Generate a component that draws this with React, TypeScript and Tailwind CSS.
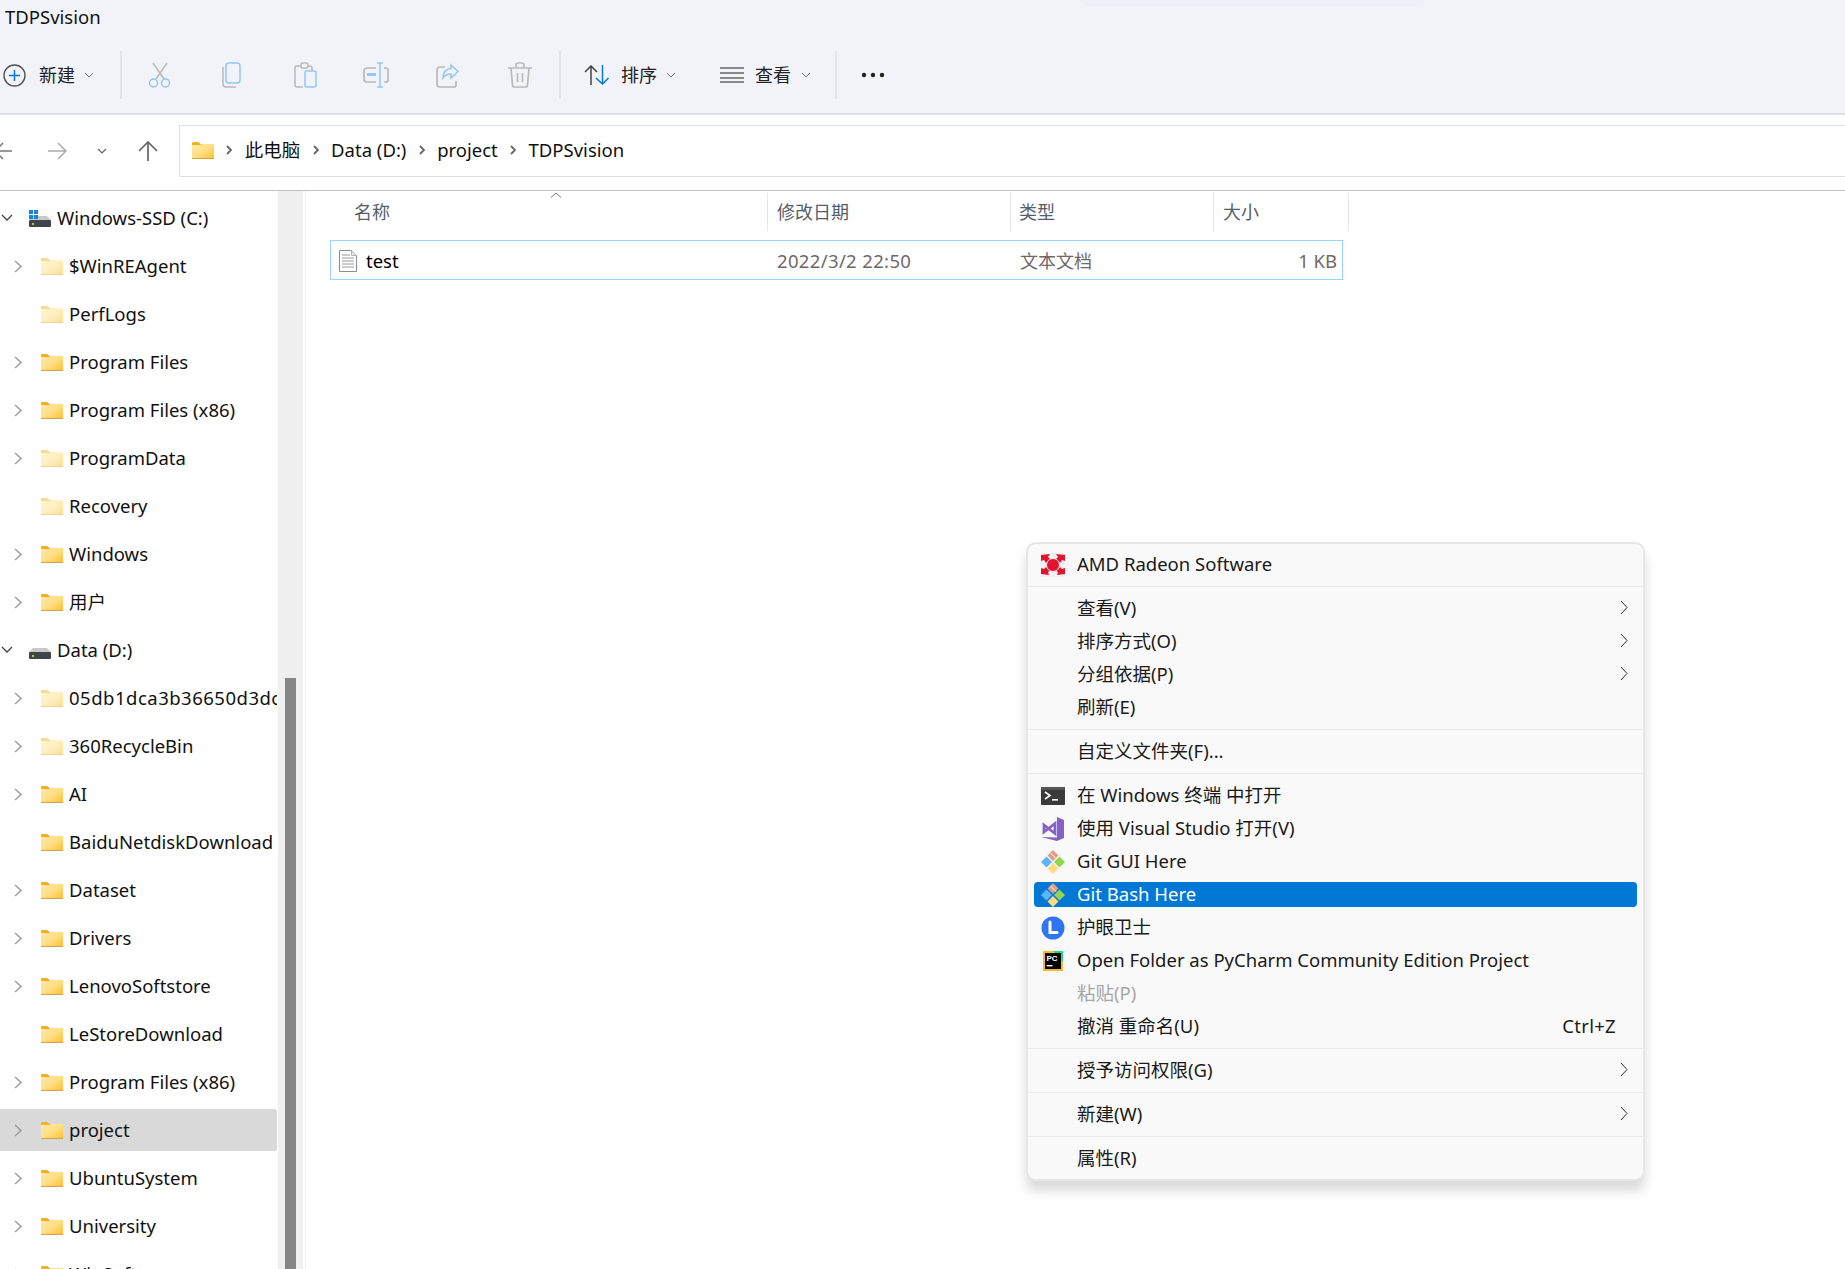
const GREY = '#b9b9b9';
const BLUE = '#93c6f5';

function Folder({ pale }: { pale?: boolean }) {
  return (
    <svg width="22" height="17" viewBox="0 0 22 17" className={pale ? 'shrink-0 opacity-50' : 'shrink-0'}>
      <defs>
        <linearGradient id="folderBody" x1="0" y1="0" x2="1" y2="1">
          <stop offset="0" stopColor="#ffeaa6" />
          <stop offset="0.5" stopColor="#ffdf85" />
          <stop offset="1" stopColor="#fcbf2a" />
        </linearGradient>
      </defs>
      <path d="M0 1a1 1 0 0 1 1-1h5.5l2 2H22v3H0z" fill="#f4b223" />
      <path d="M0 3h8.500L10 2h12v15H0z" fill="url(#folderBody)" />
      <rect x="0" y="16" width="22" height="1" fill="#d8a14e" />
    </svg>
  );
}

function Drive({ windows }: { windows?: boolean }) {
  return (
    <svg width="22" height="17" viewBox="0 0 22 17" className="shrink-0">
      <path d="M4 6h14l4 4H0z" fill="#c9c9c9" />
      <rect x="0" y="10" width="22" height="7" rx="1" fill="#3f4547" />
      <rect x="3" y="13" width="2" height="2" fill="#9ad24a" />
      {windows && (
        <g fill="#1684e0">
          <rect x="0" y="0" width="4" height="4" />
          <rect x="5" y="0" width="4" height="4" />
          <rect x="0" y="5" width="4" height="4" />
          <rect x="5" y="5" width="4" height="4" />
        </g>
      )}
    </svg>
  );
}

function Caret({ open }: { open?: boolean }) {
  if (open) {
    return (
      <svg width="12" height="8" viewBox="0 0 12 8" className="shrink-0" fill="none" stroke="#444" strokeWidth="1.3">
        <path d="M1 1l5 5 5-5" />
      </svg>
    );
  }
  return (
    <svg width="9" height="13" viewBox="0 0 9 13" fill="none" stroke="#9b9b9b" strokeWidth="1.5">
      <path d="M1 1l6 5.500-6 5.500" />
    </svg>
  );
}

const tree = [
  { name: 'Windows-SSD (C:)', drive: 'c' },
  { name: '$WinREAgent', pale: true, arrow: true },
  { name: 'PerfLogs', pale: true },
  { name: 'Program Files', arrow: true },
  { name: 'Program Files (x86)', arrow: true },
  { name: 'ProgramData', pale: true, arrow: true },
  { name: 'Recovery', pale: true },
  { name: 'Windows', arrow: true },
  { name: '用户', arrow: true },
  { name: 'Data (D:)', drive: 'd' },
  { name: '05db1dca3b36650d3dc', pale: true, arrow: true, wide: true },
  { name: '360RecycleBin', pale: true, arrow: true },
  { name: 'AI', arrow: true },
  { name: 'BaiduNetdiskDownload' },
  { name: 'Dataset', arrow: true },
  { name: 'Drivers', arrow: true },
  { name: 'LenovoSoftstore', arrow: true },
  { name: 'LeStoreDownload' },
  { name: 'Program Files (x86)', arrow: true },
  { name: 'project', arrow: true, selected: true },
  { name: 'UbuntuSystem', arrow: true },
  { name: 'University', arrow: true },
  { name: 'WinSoft', arrow: true },
];

function TreeRow({ item }: { item: (typeof tree)[number] }) {
  return (
    <div className="h-[48px] py-[3px] pr-[1px]">
      <div className={`flex h-[42px] items-center rounded-r-[2px] text-[18.5px] whitespace-nowrap overflow-hidden text-[#111] ${item.selected ? 'bg-[#d9d9d9]' : ''}`}>
        {item.drive ? (
          <>
            <div className="w-[29px] pl-[1px] shrink-0 flex"><Caret open /></div>
            <Drive windows={item.drive === 'c'} />
            <span className="ml-[6px]">{item.name}</span>
          </>
        ) : (
          <>
            <div className="w-[41px] pl-[14px] shrink-0 flex">{item.arrow && <Caret />}</div>
            <Folder pale={item.pale} />
            <span className={item.wide ? 'ml-[6px] tracking-[0.5px]' : 'ml-[6px]'}>{item.name}</span>
          </>
        )}
      </div>
    </div>
  );
}

function Divider() {
  return <div className="w-[2px] h-[48px] bg-[#e2e4e9] shrink-0" />;
}

function SmallChevron() {
  return (
    <svg width="10" height="6" viewBox="0 0 10 6" fill="none" stroke="#777" strokeWidth="1" className="shrink-0">
      <path d="M1 1l4 4 4-4" />
    </svg>
  );
}

function ToolIcon({ children }: { children: React.ReactNode }) {
  return (
    <div className="w-[72px] flex justify-center shrink-0">
      <svg width="26" height="26" viewBox="0 0 26 26" fill="none" strokeWidth="1.5">
        {children}
      </svg>
    </div>
  );
}

function Crumb({ text }: { text: string }) {
  return (
    <>
      <svg width="6" height="10" viewBox="0 0 6 10" fill="none" stroke="#666" strokeWidth="1.8" className="shrink-0">
        <path d="M1 1l4 4-4 4" />
      </svg>
      <span className="text-[18.5px] text-[#111]">{text}</span>
    </>
  );
}

function GitIcon() {
  return (
    <svg width="24" height="24" viewBox="0 0 24 24">
      <path d="M12 0l5.500 5.500L12 11 6.500 5.500z" fill="#e39c84" />
      <path d="M9.500 3l5.500 5.500" stroke="#fff" strokeWidth="1" />
      <path d="M5.500 6.500L11 12l-5.500 5.500L0 12z" fill="#5db4ff" />
      <path d="M18.500 6.500L24 12l-5.500 5.500L13 12z" fill="#92d650" />
      <path d="M12 13l5.500 5.500L12 24l-5.500-5.500z" fill="#ffdc80" />
    </svg>
  );
}

function menuIcon(name?: string) {
  switch (name) {
    case 'amd':
      return (
        <svg width="24" height="24" viewBox="0 0 24 24">
          <rect width="24" height="24" fill="#f0f0f0" />
          <g fill="#e2132e">
            <path d="M0 2l9-1-2 3 2 2-4 4-2-3-3 1z" />
            <path d="M24 2l-9-1 2 3-2 2 4 4 2-3 3 1z" />
            <path d="M0 21l8 1-1-3 2-1-4-4-2 2-3-1z" />
            <path d="M24 21l-8 1 1-3-2-1 4-4 2 2 3-1z" />
          </g>
          <circle cx="12" cy="12" r="6.500" fill="#e2132e" stroke="#f0f0f0" strokeWidth="1" />
        </svg>
      );
    case 'terminal':
      return (
        <svg width="24" height="24" viewBox="0 0 24 24">
          <rect y="3" width="24" height="18" rx="1" fill="#3a3a3a" />
          <rect y="3" width="24" height="3" fill="#555" />
          <path d="M4 8l5 3.500-5 3.500" fill="none" stroke="#fff" strokeWidth="1.6" />
          <rect x="11" y="15" width="6" height="1.6" fill="#fff" />
        </svg>
      );
    case 'vs':
      return (
        <svg width="24" height="24" viewBox="0 0 24 24">
          <path d="M16 0l7 3v18l-7 3L0 20l16 .5z" fill="#8661c5" />
          <path d="M3 8v7l4.500-3.500L14 6.500v10l-6.500-5z" fill="none" stroke="#8661c5" strokeWidth="2.8" />
        </svg>
      );
    case 'git':
      return <GitIcon />;
    case 'eye':
      return (
        <svg width="24" height="24" viewBox="0 0 24 24">
          <circle cx="12" cy="12" r="11.500" fill="#2f74f0" />
          <path d="M9 6v10.500h7" fill="none" stroke="#fff" strokeWidth="3" strokeLinecap="round" />
        </svg>
      );
    case 'pycharm':
      return (
        <svg width="24" height="24" viewBox="0 0 24 24">
          <path d="M2 2h20v20H2z" fill="#fcb72b" />
          <path d="M12 2h10v11z" fill="#21d789" />
          <rect x="4" y="4" width="16" height="16" fill="#000" />
          <text x="5.500" y="11.500" fontSize="8" fontWeight="700" fill="#fff" fontFamily="Liberation Sans, sans-serif">PC</text>
          <rect x="5.500" y="16" width="6" height="1.4" fill="#fff" />
        </svg>
      );
    default:
      return null;
  }
}

function MenuItem({ icon, label, arrow, hint, active, disabled }: { icon?: string; label: string; arrow?: boolean; hint?: string; active?: boolean; disabled?: boolean }) {
  return (
    <div className="h-[33px] py-[4px] mx-[6px]">
      <div className={`h-[25px] flex items-center pl-[7px] rounded-[4px] text-[18.5px] whitespace-nowrap ${active ? 'bg-[#0078d4] text-white' : disabled ? 'text-[#a6a6a6]' : 'text-[#1a1a1a]'}`}>
        <div className="w-[24px] h-[24px] shrink-0">{menuIcon(icon)}</div>
        <span className="ml-[12px] flex-1 -mt-[2px]">{label}</span>
        {hint && <span className="mr-[21px] -mt-[2px] tracking-[0.3px]">{hint}</span>}
        {arrow && (
          <svg width="8" height="15" viewBox="0 0 8 15" fill="none" stroke="#333" strokeWidth="1" className="mr-[9px] -mt-[2px]">
            <path d="M1 1l6 6.500-6 6.500" />
          </svg>
        )}
      </div>
    </div>
  );
}

function Sep() {
  return <div className="h-px my-[5px] bg-[#e8e8e8]" />;
}

export default function App() {
  return (
    <div className="relative h-[1269px] overflow-hidden bg-white flex flex-col [font-family:'Noto_Sans','Noto_Sans_CJK_SC',sans-serif]">
      {/* title + command bar */}
      <div className="bg-[#f1f3f9] border-b-2 border-[#e0e2e8] h-[115px] shrink-0">
        <div className="h-[51px] pl-[5px] pt-[4px] text-[18.5px] leading-[26px] text-[#111]">TDPSvision</div>
        <div className="flex items-center h-[48px]">
          <div className="w-[120px] flex items-center pl-[3px] shrink-0">
            <svg width="23" height="23" viewBox="0 0 23 23" fill="none" className="shrink-0">
              <circle cx="11.500" cy="11.500" r="10.500" stroke="#555" strokeWidth="1.4" />
              <path d="M11.500 6v11M6 11.500h11" stroke="#0a7ad6" strokeWidth="1.6" />
            </svg>
            <span className="ml-[13px] text-[18px] text-[#222]">新建</span>
            <div className="ml-[9px]"><SmallChevron /></div>
          </div>
          <Divider />
          <div className="w-[2px]" />
          <ToolIcon>
            <path d="M6 1l11 16M20 1L9 17" stroke={GREY} />
            <circle cx="6.500" cy="21" r="4" stroke={BLUE} />
            <circle cx="18.500" cy="21" r="4" stroke={BLUE} />
          </ToolIcon>
          <ToolIcon>
            <rect x="7" y="1" width="14" height="20" rx="3" stroke={BLUE} />
            <path d="M4 5v17a3 3 0 0 0 3 3h10" stroke={GREY} />
          </ToolIcon>
          <ToolIcon>
            <path d="M10 4H6a2 2 0 0 0-2 2v17a2 2 0 0 0 2 2h6M17 4h2a2 2 0 0 1 2 2v3" stroke={GREY} />
            <rect x="10" y="1" width="7" height="5" rx="1.500" stroke={GREY} />
            <rect x="14" y="9" width="11" height="16" rx="2" stroke={BLUE} />
          </ToolIcon>
          <ToolIcon>
            <path d="M13 6H4a3 3 0 0 0-3 3v8a3 3 0 0 0 3 3h9M21 6h2a2 2 0 0 1 2 2v10a2 2 0 0 1-2 2h-2" stroke={GREY} strokeWidth="1.7" />
            <path d="M14 1h6M17 1v24M14 25h6" stroke={BLUE} />
            <rect x="4" y="11" width="9" height="3" fill={BLUE} />
          </ToolIcon>
          <ToolIcon>
            <path d="M10 5H5a3 3 0 0 0-3 3v14a3 3 0 0 0 3 3h14a2 2 0 0 0 2-2v-4" stroke={GREY} strokeWidth="1.7" />
            <path d="M16 3l7 6.500-7 6.500v-4c-4 0-6 1-8 4 0-6 3-9 8-9.500z" stroke={BLUE} />
          </ToolIcon>
          <ToolIcon>
            <path d="M1 6h24M9 5V3a2 2 0 0 1 2-2h4a2 2 0 0 1 2 2v2M4 6l1.500 17a2 2 0 0 0 2 2h11a2 2 0 0 0 2-2L22 6M10.500 11v9M15.500 11v9" stroke={GREY} strokeWidth="1.7" />
          </ToolIcon>
          <div className="w-[3px]" />
          <Divider />
          <div className="w-[23px] shrink-0" />
          <svg width="25" height="20" viewBox="0 0 25 20" fill="none" strokeWidth="1.5" className="shrink-0">
            <path d="M1 7l6-6 6 6M7 1v19" stroke="#444" />
            <path d="M12 13l6.500 6 6-6M18.500 19V0" stroke="#0a7ad6" />
          </svg>
          <span className="ml-[12px] text-[18px] text-[#222]">排序</span>
          <div className="ml-[9px]"><SmallChevron /></div>
          <div className="w-[44px] shrink-0" />
          <svg width="24" height="16" viewBox="0 0 24 16" fill="none" stroke="#666" strokeWidth="1.3" className="shrink-0">
            <path d="M0 1h24M0 6h24M0 11h24M0 15h24" />
          </svg>
          <span className="ml-[11px] text-[18px] text-[#222]">查看</span>
          <div className="ml-[10px]"><SmallChevron /></div>
          <div className="w-[24px] shrink-0" />
          <Divider />
          <svg width="24" height="6" viewBox="0 0 24 6" fill="#222" className="ml-[24px] shrink-0">
            <circle cx="3" cy="3" r="2.200" />
            <circle cx="12" cy="3" r="2.200" />
            <circle cx="21" cy="3" r="2.200" />
          </svg>
        </div>
      </div>

      {/* tab remnant at the very top */}
      <div className="absolute left-[1080px] top-0 w-[345px] h-[6px] rounded-b-[8px] bg-[#edf0f7]" />

      {/* nav row */}
      <div className="h-[76px] shrink-0 pt-[10px] border-b border-[#bfbfbf] flex items-start">
        <div className="h-[52px] flex items-center shrink-0">
          <svg width="20" height="18" viewBox="0 0 20 18" fill="none" stroke="#777" strokeWidth="1.5" className="-ml-[6px]">
            <path d="M18 9H1M9 1L1 9l8 8" />
          </svg>
          <svg width="19" height="18" viewBox="0 0 19 18" fill="none" stroke="#aaa" strokeWidth="1.5" className="ml-[34px]">
            <path d="M0 9h18M10 1l8 8-8 8" />
          </svg>
          <svg width="10" height="6" viewBox="0 0 10 6" fill="none" stroke="#666" strokeWidth="1.2" className="ml-[30px]">
            <path d="M1 1l4 4 4-4" />
          </svg>
          <svg width="20" height="20" viewBox="0 0 20 20" fill="none" stroke="#666" strokeWidth="1.7" className="ml-[31px]">
            <path d="M10 20V1M1 10l9-9 9 9" />
          </svg>
        </div>
        <div className="ml-[21px] flex-1 h-[52px] border border-r-0 border-[#e0e0e0] flex items-center pl-[12px] pb-[2px] gap-[12.4px] whitespace-nowrap">
          <Folder />
          <Crumb text="此电脑" />
          <Crumb text="Data (D:)" />
          <Crumb text="project" />
          <Crumb text="TDPSvision" />
        </div>
      </div>

      {/* body */}
      <div className="flex flex-1 min-h-0">
        <div className="w-[278px] shrink-0 overflow-hidden pt-[3px]">
          {tree.map((item, i) => (
            <TreeRow key={i} item={item} />
          ))}
        </div>
        <div className="w-[25px] shrink-0 bg-[#f0f0f0] pl-[7px]">
          <div className="w-[11px] mt-[487px] h-[700px] bg-[#868686]" />
        </div>
        <div className="w-[3px] shrink-0 border-r border-[#f0f0f0]" />

        <div className="flex-1 min-w-0">
          <div className="relative flex h-[40px] pt-[2px] text-[18px] text-[#55606b]">
            <div className="w-[461px] pl-[48px] flex items-center">名称</div>
            <svg width="12" height="6" viewBox="0 0 12 6" fill="none" stroke="#777" strokeWidth="1" className="absolute left-[244px] top-[1px]">
              <path d="M1 5.500L6 1l5 4.500" />
            </svg>
            <div className="w-[243px] pl-[9px] flex items-center border-l border-[#e5e5e5]">修改日期</div>
            <div className="w-[203px] pl-[8px] flex items-center border-l border-[#e5e5e5]">类型</div>
            <div className="w-[136px] pl-[9px] flex items-center border-l border-r border-[#e5e5e5]">大小</div>
          </div>
          <div className="ml-[24px] mt-[9px] w-[1013px] h-[40px] pt-[1px] border border-[#99d1ff] flex items-center text-[18.5px]">
            <svg width="18" height="22" viewBox="0 0 18 22" className="ml-[8px] shrink-0">
              <path d="M.5.500h12l5 5v16H.5z" fill="#fff" stroke="#8c8c8c" />
              <path d="M12.500.500v5h5" fill="#e6e6e6" stroke="#b5b5b5" />
              <path d="M3 5h8M3 8h12M3 11h12M3 14h12M3 17h12" stroke="#999" />
            </svg>
            <span className="ml-[9px] w-[411px] text-black">test</span>
            <span className="w-[243px] text-[#6f6868] tracking-[0.35px]">2022/3/2 22:50</span>
            <span className="flex-1 mt-[1px] text-[#6f6868] text-[18px]">文本文档</span>
            <span className="mr-[5px] text-[#6f6868]">1 KB</span>
          </div>
        </div>
      </div>

      {/* context menu */}
      <div className="absolute left-[1026px] top-[542px] w-[619px] border-2 border-[#e6e6e6] rounded-[10px] bg-[#f9f9f9] py-[4px] shadow-[0_10px_12px_rgba(0,0,0,0.15)]">
        <MenuItem icon="amd" label="AMD Radeon Software" />
        <Sep />
        <MenuItem label="查看(V)" arrow />
        <MenuItem label="排序方式(O)" arrow />
        <MenuItem label="分组依据(P)" arrow />
        <MenuItem label="刷新(E)" />
        <Sep />
        <MenuItem label="自定义文件夹(F)..." />
        <Sep />
        <MenuItem icon="terminal" label="在 Windows 终端 中打开" />
        <MenuItem icon="vs" label="使用 Visual Studio 打开(V)" />
        <MenuItem icon="git" label="Git GUI Here" />
        <MenuItem icon="git" label="Git Bash Here" active />
        <MenuItem icon="eye" label="护眼卫士" />
        <MenuItem icon="pycharm" label="Open Folder as PyCharm Community Edition Project" />
        <MenuItem label="粘贴(P)" disabled />
        <MenuItem label="撤消 重命名(U)" hint="Ctrl+Z" />
        <Sep />
        <MenuItem label="授予访问权限(G)" arrow />
        <Sep />
        <MenuItem label="新建(W)" arrow />
        <Sep />
        <MenuItem label="属性(R)" />
      </div>
    </div>
  );
}
